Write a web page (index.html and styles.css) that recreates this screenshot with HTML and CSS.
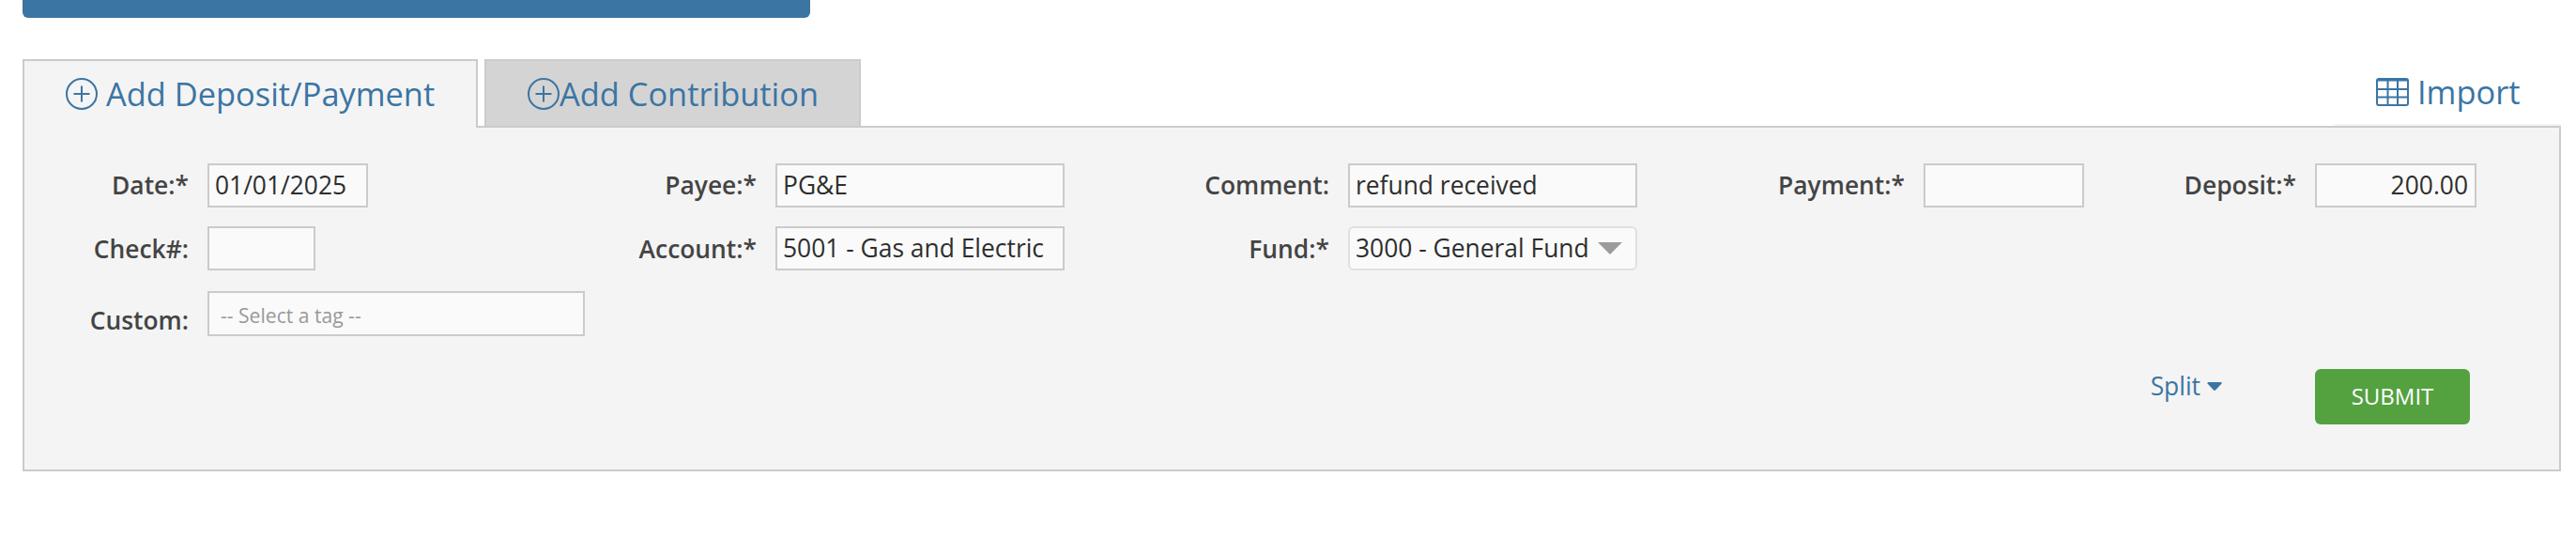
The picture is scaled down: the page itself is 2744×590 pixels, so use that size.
FILE: index.html
```html
<!DOCTYPE html>
<html lang="en">

<head>
    <meta charset="utf-8">
    <title>Add Deposit/Payment</title>
    <link rel="stylesheet" href="styles.css">
</head>

<body>
    <div class="topBar"></div>
    <div class="tabRow">
        <a class="tab active">
            <svg class="plusIcon" viewBox="0 0 34 34">
                <circle cx="17" cy="17" r="16" />
                <path d="M8.5 17h17M17 8.5v17" />
            </svg>
            <span class="tabText spaced">Add Deposit/Payment</span>
        </a>
        <a class="tab">
            <svg class="plusIcon" viewBox="0 0 34 34">
                <circle cx="17" cy="17" r="16" />
                <path d="M8.5 17h17M17 8.5v17" />
            </svg>
            <span class="tabText">Add Contribution</span>
        </a>
        <a class="importLink">
            <svg class="tableIcon" viewBox="0 0 35 30">
                <rect x="1" y="1" width="33" height="28" rx="2" />
                <path d="M1 2.5h33M1 12h33M1 20.5h33M12.5 3v26M23 3v26" />
            </svg>
            <span>Import</span>
        </a>
    </div>
    <form class="panel">
        <div class="fields">
            <label for="date">Date:*</label>
            <input id="date" type="text" value="01/01/2025">
            <label for="payee">Payee:*</label>
            <input id="payee" type="text" value="PG&amp;E">
            <label for="comment">Comment:</label>
            <input id="comment" type="text" value="refund received">
            <label for="payment">Payment:*</label>
            <input id="payment" type="text">
            <label for="deposit">Deposit:*</label>
            <input id="deposit" class="right" type="text" value="200.00">

            <label class="second" for="check">Check#:</label>
            <input id="check" class="check" type="text">
            <label class="second" for="account">Account:*</label>
            <input id="account" type="text" value="5001 - Gas and Electric">
            <label class="second" for="fund">Fund:*</label>
            <div id="fund" class="fundSelect">
                <span>3000 - General Fund</span>
                <svg class="fundArrow" viewBox="0 0 26 13">
                    <path d="M0 0h26L13 13z" />
                </svg>
            </div>
        </div>
        <div class="customRow">
            <label for="custom">Custom:</label>
            <input id="custom" class="custom" type="text" placeholder="-- Select a tag --">
        </div>
        <div class="actions">
            <a class="split">Split
                <svg class="caret" viewBox="0 0 16 9">
                    <path d="M1.5 0h13q1.5 0 1 1.5L9 8.4q-1 .9-2 0L.5 1.5Q0 0 1.5 0z" />
                </svg>
            </a>
            <button class="submit" type="button">SUBMIT</button>
        </div>
    </form>
</body>

</html>
```
FILE: styles.css
```css
* {
    box-sizing: border-box;
}

body {
    margin: 0;
    padding: 0 16px 0 24px;
    background-color: #fff;
    color: #333;
    font-family: "Open Sans", "Noto Sans", sans-serif;
    font-size: 26.4px;
}

.topBar {
    width: 839px;
    height: 19px;
    background-color: #3b75a3;
    border-radius: 0 0 6px 6px;
}

.tabRow {
    display: flex;
    height: 71px;
    margin-top: 44px;
}

.tab {
    display: flex;
    align-items: center;
    width: 401px;
    height: 71px;
    padding: 1px 0 0 44px;
    border: 2px solid #cbcbcb;
    border-bottom: 0;
    background-color: #d4d4d4;
    color: #3b75a3;
    font-size: 34.4px;
    white-space: nowrap;
}

/* runs over the top border of the panel */
.tab.active {
    width: 485px;
    height: 73px;
    padding: 0 0 1px 44px;
    margin-right: 7px;
    background-color: #f4f4f4;
    z-index: 1;
}

.tabText {
    padding-bottom: 2px;
}

.plusIcon {
    flex: none;
    width: 34px;
    height: 34px;
    fill: none;
    stroke: #3b75a3;
    stroke-width: 2;
}

.spaced {
    margin-left: 9px;
}

.importLink {
    display: flex;
    align-items: center;
    width: 241px;
    margin-left: auto;
    padding-left: 44px;
    border-bottom: 2px solid #f4f4f4;
    color: #3b75a3;
    font-size: 34.4px;
}

.tableIcon {
    flex: none;
    width: 35px;
    height: 30px;
    margin-right: 9px;
    fill: none;
    stroke: #3b75a3;
    stroke-width: 2;
}

.panel {
    height: 368px;
    padding-top: 38px;
    border: 2px solid #cbcbcb;
    background-color: #f4f4f4;
}

.fields {
    display: grid;
    grid-template-columns: 195px 171px 434px 308px 302px 308px 305px 171px 246px 172px;
    grid-auto-rows: 47px;
    row-gap: 20px;
}

label {
    align-self: center;
    padding: 0 20px 2px 0;
    color: #444;
    font-weight: 600;
    line-height: 36px;
    text-align: right;
}

.second {
    padding-top: 2px;
}

input {
    width: 100%;
    height: 47px;
    padding: 0 6px 2px;
    border: 2px solid #cbcbcb;
    border-radius: 0;
    background-color: #fafafa;
    color: #2e2e2e;
    font: inherit;
}

.right {
    padding-right: 7px;
    text-align: right;
}

.check {
    width: 115px;
}

.fundSelect {
    display: flex;
    align-items: center;
    justify-content: space-between;
    padding: 0 14px 2px 6px;
    border: 2px solid #e0e0e0;
    border-radius: 6px;
    background-color: #fafafa;
    color: #2e2e2e;
    white-space: nowrap;
}

.fundArrow {
    width: 26px;
    height: 13px;
    margin-top: 2px;
    fill: #9b9b9b;
}

.customRow {
    display: grid;
    grid-template-columns: 195px 402px;
    height: 48px;
    margin-top: 22px;
}

.customRow label {
    align-self: start;
    padding: 13px 20px 0 0;
}

.custom {
    height: 48px;
    padding: 3px 12px 0;
    font-size: 21.1px;
}

.custom::placeholder {
    color: #999;
    opacity: 1;
}

.actions {
    display: flex;
    justify-content: flex-end;
    margin-top: 35px;
    padding-right: 95px;
}

.split {
    display: flex;
    align-items: center;
    height: 36px;
    margin-right: 99px;
    color: #3b75a3;
}

.caret {
    width: 16px;
    height: 9px;
    margin-left: 7px;
    fill: #3b75a3;
}

.submit {
    width: 165px;
    height: 59px;
    padding: 0 0 2px;
    border: 0;
    border-radius: 6px;
    background-color: #54a140;
    color: #fff;
    font: inherit;
    font-size: 24px;
}
```
